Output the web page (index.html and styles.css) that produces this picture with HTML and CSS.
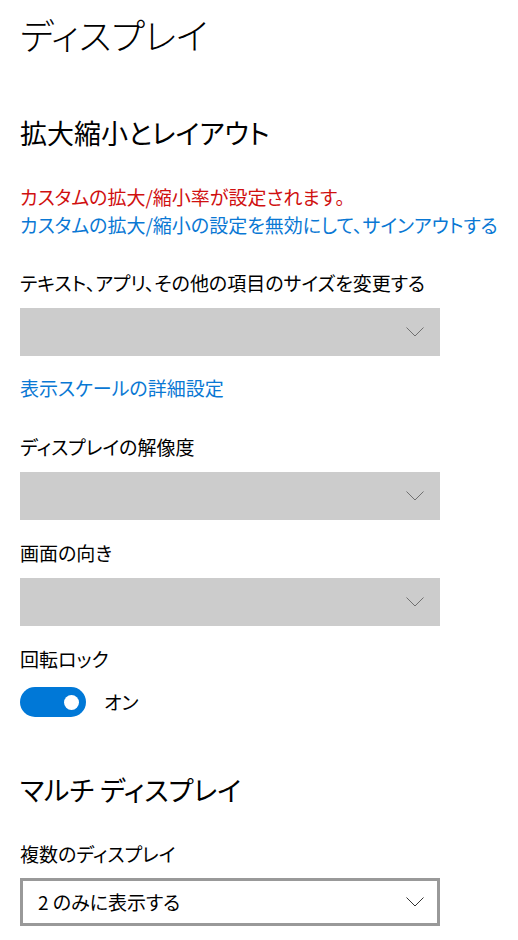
FILE: index.html
```html
<!DOCTYPE html>
<html lang="ja">
<head>
<meta charset="utf-8">
<link rel="stylesheet" href="styles.css">
</head>
<body>
<main class="page">
  <h1 class="title">ディスプレイ</h1>

  <h2 class="section">拡大縮小とレイアウト</h2>
  <p class="warn">カスタムの拡大/縮小率が設定されます。</p>
  <a class="link link-tight">カスタムの拡大/縮小の設定を無効にして、サインアウトする</a>

  <div class="field field-first">
    <div class="label">テキスト、アプリ、その他の項目のサイズを変更する</div>
    <div class="select disabled"><span class="value"></span><svg class="chev" width="18" height="10" viewBox="0 0 18 10"><path d="M0.5 0.5 L9 9 L17.5 0.5" fill="none" stroke="#707070" stroke-width="1"/></svg></div>
  </div>

  <a class="link link-block">表示スケールの詳細設定</a>

  <div class="field field-after-link">
    <div class="label">ディスプレイの解像度</div>
    <div class="select disabled"><span class="value"></span><svg class="chev" width="18" height="10" viewBox="0 0 18 10"><path d="M0.5 0.5 L9 9 L17.5 0.5" fill="none" stroke="#707070" stroke-width="1"/></svg></div>
  </div>

  <div class="field">
    <div class="label">画面の向き</div>
    <div class="select disabled"><span class="value"></span><svg class="chev" width="18" height="10" viewBox="0 0 18 10"><path d="M0.5 0.5 L9 9 L17.5 0.5" fill="none" stroke="#707070" stroke-width="1"/></svg></div>
  </div>

  <div class="field">
    <div class="label">回転ロック</div>
    <div class="toggle-row">
      <span class="toggle"><span class="knob"></span></span>
      <span class="toggle-text">オン</span>
    </div>
  </div>

  <h2 class="section section-second">マルチ ディスプレイ</h2>

  <div class="field field-multi">
    <div class="label">複数のディスプレイ</div>
    <div class="select active"><span class="value">2 のみに表示する</span><svg class="chev" width="18" height="10" viewBox="0 0 18 10"><path d="M0.5 0.5 L9 9 L17.5 0.5" fill="none" stroke="#333" stroke-width="1"/></svg></div>
  </div>
</main>
</body>
</html>
```

FILE: styles.css
```css
* { box-sizing: border-box; }
html, body { margin: 0; padding: 0; background: #fff; }
body {
  font-family: "Noto Sans CJK JP", "Noto Sans", sans-serif;
  font-feature-settings: "palt" 1;
  color: #000;
  font-size: 19px;
  line-height: 28px;
}
.page {
  padding: 13px 0 0 20px;
  width: 518px;
}
.title {
  margin: 0;
  font-size: 36px;
  line-height: 42px;
  font-weight: 300;
}
.section {
  margin: 60px 0 0;
  font-size: 27px;
  line-height: 36px;
  font-weight: 400;
}
.section-second { margin-top: 55px; }
.warn {
  margin: 32px 0 0;
  color: #d01010;
}
.link {
  display: block;
  color: #0a78d4;
  text-decoration: none;
}
.link-block { margin-top: 18px; }
.field { margin-top: 19px; }
.field-first { margin-top: 30px; }
.field-after-link { margin-top: 31px; }
.field-multi { margin-top: 32px; }
.label { height: 28px; }
.select {
  margin-top: 11px;
  width: 420px;
  height: 48px;
  display: flex;
  align-items: center;
  justify-content: space-between;
  padding: 0 16px 0 18px;
}
.select.disabled { background: #cccccc; }
.select.active {
  margin-top: 10px;
  border: 3px solid #999999;
  background: #fff;
  padding: 0 13px 0 15px;
}
.chev { display: block; }
.toggle-row {
  margin-top: 14px;
  display: flex;
  align-items: center;
  height: 30px;
}
.toggle {
  width: 66px;
  height: 30px;
  border-radius: 15px;
  background: #0078d7;
  position: relative;
  display: block;
}
.knob {
  position: absolute;
  width: 15px;
  height: 15px;
  border-radius: 50%;
  background: #fff;
  right: 7px;
  top: 7.5px;
}
.toggle-text { margin-left: 18px; }
```
